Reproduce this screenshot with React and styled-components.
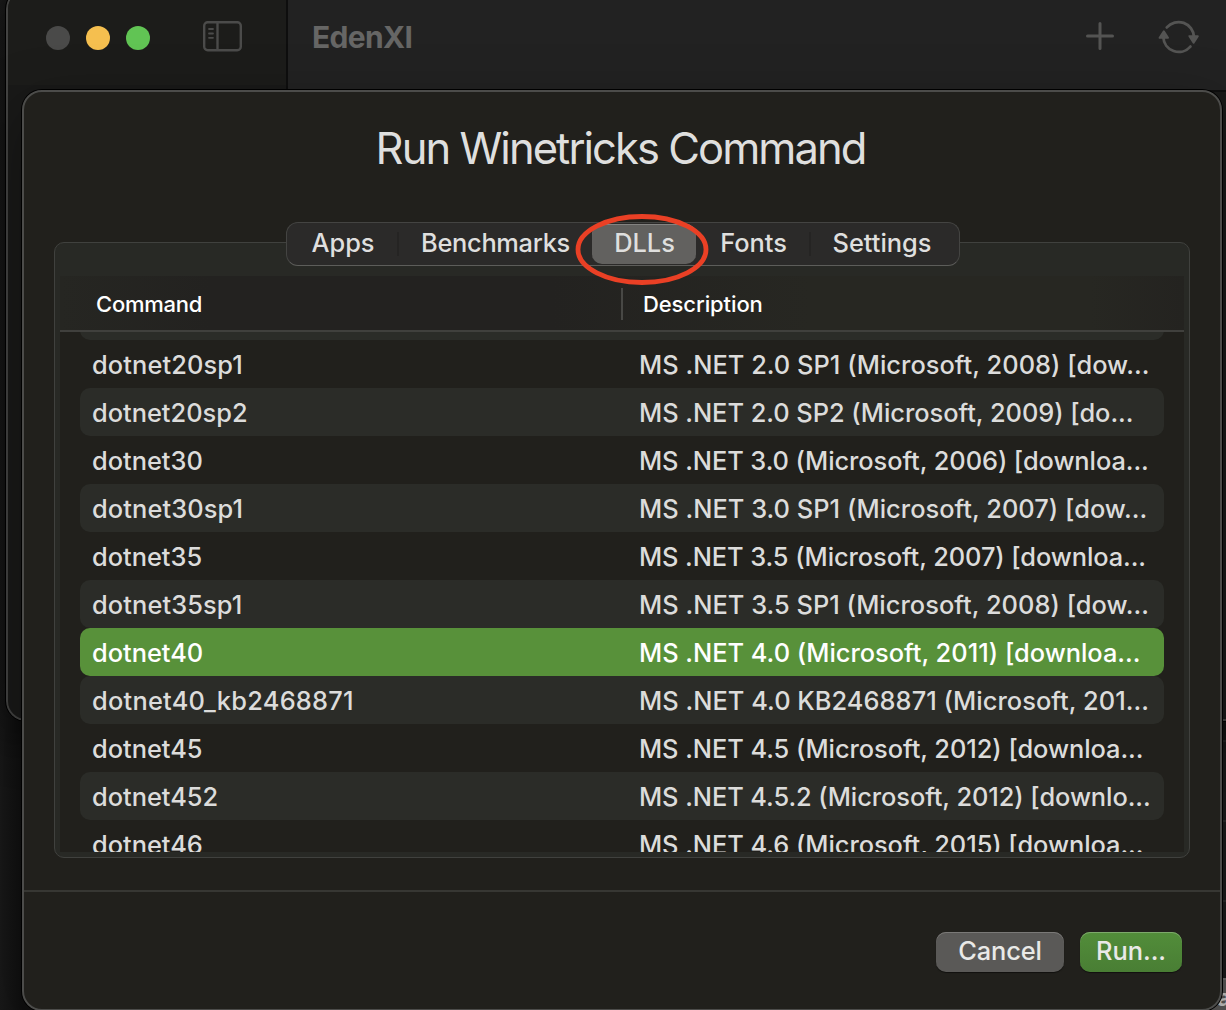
import React from 'react';
import styled, { createGlobalStyle } from 'styled-components';

const Global = createGlobalStyle`
  * { box-sizing: border-box; }
  body { margin: 0; background: #191919; overflow: hidden; }
`;

const Desktop = styled.div`
  position: relative;
  width: 1226px;
  height: 1010px;
  overflow: hidden;
  background: linear-gradient(90deg, #191919 0, #101010 22px, #161615 100%);
  font-family: Inter, "Liberation Sans", sans-serif;
  color: #dfdfde;
  font-size: 25.4px;
`;

const BackWindow = styled.div`
  position: absolute;
  left: 1190px;
  top: 740px;
  width: 80px;
  height: 270px;
  display: grid;
  grid-template-rows: 80px 80px 78px 1fr;
  background: #1b1b1b;
`;

const BackRow = styled.div`
  padding: 8px 0 0 27px;
  font-size: 24px;
  font-weight: 700;
  line-height: 20px;
  color: #c6c6c5;
  background: ${(p) => (p.$light ? '#5a5958' : 'transparent')};
  border-top: 2px solid ${(p) => (p.$light ? '#6d6c6b' : '#2a2a2a')};
`;

const Window = styled.div`
  position: absolute;
  left: 5px;
  top: -12px;
  width: 1260px;
  height: 734px;
  border: 1px solid #000;
  border-radius: 21px;
  overflow: hidden;
  box-shadow: 0 16px 50px rgba(0, 0, 0, 0.45);
`;

const WindowInner = styled.div`
  height: 100%;
  border: 2px solid #434342;
  border-radius: 20px;
  overflow: hidden;
  display: grid;
  grid-template-columns: 278px 2px 1fr;
  background: #191918;
`;

const Sidebar = styled.div`
  display: flex;
  align-items: center;
  height: 94px;
  padding-left: 38px;
  background: #1c1c1a;
`;

const Lights = styled.div`
  display: flex;
  gap: 16px;
  margin-right: 53px;
`;

const Light = styled.span`
  width: 24px;
  height: 24px;
  border-radius: 50%;
  background: ${(p) => p.$color};
`;

const Seam = styled.div`
  background: #0e0e0e;
`;

const Toolbar = styled.div`
  display: flex;
  align-items: center;
  height: 101px;
  padding: 0 62px 8px 24px;
  background: #222222;
  border-bottom: 2px solid #0e0e0e;
`;

const WindowTitle = styled.div`
  flex: 1;
  font-size: 30px;
  font-weight: 700;
  letter-spacing: -0.65px;
  color: #666665;
`;

const Sheet = styled.section`
  position: absolute;
  left: 22px;
  top: 90px;
  width: 1200px;
  height: 921px;
  display: flex;
  flex-direction: column;
  background: #21201c;
  border: 2px solid #4c4c4a;
  border-radius: 20px;
  box-shadow: 0 0 0 1px #000, 0 20px 60px rgba(0, 0, 0, 0.35);
`;

const Heading = styled.h1`
  margin: 0;
  padding-top: 29px;
  height: 130px;
  line-height: 54px;
  text-align: center;
  font-size: 43.5px;
  font-weight: 420;
  letter-spacing: -1.95px;
  text-indent: -3px;
`;

const Tabs = styled.div`
  position: relative;
  z-index: 1;
  display: flex;
  align-items: flex-start;
  align-self: flex-start;
  margin-left: 262px;
  width: 674px;
  height: 44px;
  background: #2b2a29;
  border: 1px solid #444442;
  border-bottom-color: #5d5d5a;
  border-radius: 12px;
`;

const Tab = styled.div`
  width: ${(p) => p.$w}px;
  height: 40px;
  margin-top: 1px;
  padding-left: ${(p) => p.$shift || 0}px;
  line-height: 38px;
  text-align: center;
  font-weight: 500;
  letter-spacing: ${(p) => p.$track || 0}px;
  border-radius: 10px;
  background: ${(p) => (p.$active ? '#62615f' : 'transparent')};
  box-shadow: ${(p) => (p.$active ? 'inset 0 1px #838280' : 'none')};
`;

const TabDivider = styled.span`
  width: 2px;
  height: 24px;
  margin-top: 9px;
  background: #252423;
`;

const Marker = styled.svg`
  position: absolute;
  left: 287px;
  top: -11px;
  width: 136px;
  height: 74px;
`;

const GroupBox = styled.div`
  width: 1136px;
  height: 616px;
  margin: -24px 0 0 30px;
  padding: 33px 5px 5px;
  background: #282925;
  border: 1px solid #40413e;
  border-radius: 10px;
`;

const Table = styled.div`
  height: 576px;
  overflow: hidden;
  background: #21201c;
`;

const TableHead = styled.div`
  display: flex;
  align-items: center;
  height: 56px;
  border-bottom: 2px solid #40403d;
  background: linear-gradient(90deg, #262622 0, #232220 150px, #232220 490px, #272722 750px, #272722 1030px, #242320 100%);
  color: #fff;
  font-size: 22px;
  font-weight: 500;
`;

const HeadCell = styled.div`
  padding: 2px 0 0 ${(p) => p.$pad}px;
  width: ${(p) => p.$w}px;
  letter-spacing: ${(p) => p.$track}px;
`;

const HeadDivider = styled.span`
  width: 2px;
  height: 32px;
  margin-top: 2px;
  background: #484845;
`;

const Clip = styled.div`
  height: 520px;
  overflow: hidden;
`;

const Rows = styled.div`
  margin: -40px 20px 0;
`;

const Row = styled.div`
  display: grid;
  grid-template-columns: 547px 1fr;
  height: 48px;
  line-height: 49px;
  padding-left: 12px;
  border-radius: 10px;
  font-weight: 500;
  white-space: nowrap;
  background: ${(p) => (p.$selected ? '#58913a' : p.$striped ? '#2b2c28' : 'transparent')};
  color: ${(p) => (p.$selected ? '#fff' : '#dcdcdb')};
`;

const Cell = styled.span`
  letter-spacing: ${(p) => p.$track || 0}px;
`;

const Footer = styled.footer`
  display: flex;
  justify-content: flex-end;
  gap: 16px;
  margin-top: 32px;
  padding: 40px 38px 0;
  border-top: 2px solid #373733;
`;

const Button = styled.button`
  width: ${(p) => p.$w}px;
  height: 40px;
  padding: 0 0 2px;
  border: 0;
  border-radius: 10px;
  font: 500 25.4px/38px Inter, sans-serif;
  letter-spacing: ${(p) => p.$track || 0}px;
  color: #e9e9e7;
  background: ${(p) => (p.$primary ? 'linear-gradient(#528d3a, #497e34)' : '#5a5957')};
  box-shadow: inset 0 1px ${(p) => (p.$primary ? '#7da96b' : '#7a7977')}, 0 1px 1px rgba(0, 0, 0, 0.5);
`;

const IconSlot = styled.span`
  display: flex;
  margin: ${(p) => p.$margin || 0};
`;

const rows = [
  { name: '', text: '' },
  { name: 'dotnet20sp1', text: 'MS .NET 2.0 SP1 (Microsoft, 2008) [dow...', nameTrack: 0.12, track: 0.03 },
  { name: 'dotnet20sp2', text: 'MS .NET 2.0 SP2 (Microsoft, 2009) [do...', track: -0.03 },
  { name: 'dotnet30', text: 'MS .NET 3.0 (Microsoft, 2006) [downloa...', track: -0.07 },
  { name: 'dotnet30sp1', text: 'MS .NET 3.0 SP1 (Microsoft, 2007) [dow...', nameTrack: 0.12, track: 0.03 },
  { name: 'dotnet35', text: 'MS .NET 3.5 (Microsoft, 2007) [downloa...', track: -0.08 },
  { name: 'dotnet35sp1', text: 'MS .NET 3.5 SP1 (Microsoft, 2008) [dow...', nameTrack: 0.12, track: 0.03 },
  { name: 'dotnet40', text: 'MS .NET 4.0 (Microsoft, 2011) [downloa...', track: -0.01 },
  { name: 'dotnet40_kb2468871', text: 'MS .NET 4.0 KB2468871 (Microsoft, 201...', nameTrack: 0.24, track: 0.04 },
  { name: 'dotnet45', text: 'MS .NET 4.5 (Microsoft, 2012) [downloa...', track: -0.05 },
  { name: 'dotnet452', text: 'MS .NET 4.5.2 (Microsoft, 2012) [downlo...', track: -0.07 },
  { name: 'dotnet46', text: 'MS .NET 4.6 (Microsoft, 2015) [downloa...', track: -0.05 },
];

function SidebarIcon() {
  return (
    <svg width="40" height="32" viewBox="0 0 40 32" fill="none" stroke="#4b4b4a" strokeWidth="2.4">
      <rect x="1.2" y="1.2" width="36.6" height="28" rx="3.5" />
      <path d="M14.5 1.5v28" />
      <path d="M6 8h4M6 12.5h4M6 16.8h4" strokeWidth="1.8" strokeLinecap="round" />
    </svg>
  );
}

function PlusIcon() {
  return (
    <svg width="28" height="28" viewBox="0 0 28 28" stroke="#545453" strokeWidth="3" strokeLinecap="round">
      <path d="M14 1.5v25M1.5 14h25" />
    </svg>
  );
}

function RefreshIcon() {
  return (
    <svg width="42" height="36" viewBox="0 0 42 36" fill="none" stroke="#545453" strokeWidth="2.8" strokeLinecap="round">
      <path d="M8.8 8.4A15.5 15.5 0 0 1 36 18" />
      <path d="M32.4 27.6A15.5 15.5 0 0 1 5.3 18" />
      <path d="M31.4 17.2h8.4L35.6 23.6zM1.6 18.8h8.4L5.8 12.4z" fill="#545453" strokeWidth="2" strokeLinejoin="round" />
    </svg>
  );
}

export default function App() {
  return (
    <>
      <Global />
      <Desktop>
        <BackWindow>
          <BackRow />
          <BackRow />
          <BackRow />
          <BackRow $light>a</BackRow>
        </BackWindow>
        <Window>
          <WindowInner>
            <Sidebar>
              <Lights>
                <Light $color="#4a4a49" />
                <Light $color="#f5bf4f" />
                <Light $color="#61c454" />
              </Lights>
              <IconSlot $margin="-3px 0 0">
                <SidebarIcon />
              </IconSlot>
            </Sidebar>
            <Seam />
            <Toolbar>
              <WindowTitle>EdenXI</WindowTitle>
              <IconSlot $margin="-2px 0 0">
                <PlusIcon />
              </IconSlot>
              <IconSlot $margin="0 0 0 44px">
                <RefreshIcon />
              </IconSlot>
            </Toolbar>
          </WindowInner>
        </Window>
        <Sheet>
          <Heading>Run Winetricks Command</Heading>
          <Tabs>
            <Tab $w={110} $shift={2}>Apps</Tab>
            <TabDivider />
            <Tab $w={193} $track={-0.3}>Benchmarks</Tab>
            <Tab $w={104} $shift={1} $active>DLLs</Tab>
            <Tab $w={113} $shift={2}>Fonts</Tab>
            <TabDivider />
            <Tab $w={142}>Settings</Tab>
            <Marker viewBox="0 0 136 74" fill="none">
              <ellipse cx="68" cy="37.5" rx="64" ry="33" stroke="#ea4025" strokeWidth="4.8" />
            </Marker>
          </Tabs>
          <GroupBox>
            <Table>
              <TableHead>
                <HeadCell $w={561} $pad={36} $track={-0.25}>Command</HeadCell>
                <HeadDivider />
                <HeadCell $w={400} $pad={20} $track={-0.1}>Description</HeadCell>
              </TableHead>
              <Clip>
                <Rows>
                  {rows.map((row, i) => (
                    <Row key={i} $striped={i % 2 === 0} $selected={row.name === 'dotnet40'}>
                      <Cell $track={row.nameTrack}>{row.name}</Cell>
                      <Cell $track={row.track}>{row.text}</Cell>
                    </Row>
                  ))}
                </Rows>
              </Clip>
            </Table>
          </GroupBox>
          <Footer>
            <Button $w={128} $track={-0.1}>Cancel</Button>
            <Button $w={102} $primary>Run...</Button>
          </Footer>
        </Sheet>
      </Desktop>
    </>
  );
}
